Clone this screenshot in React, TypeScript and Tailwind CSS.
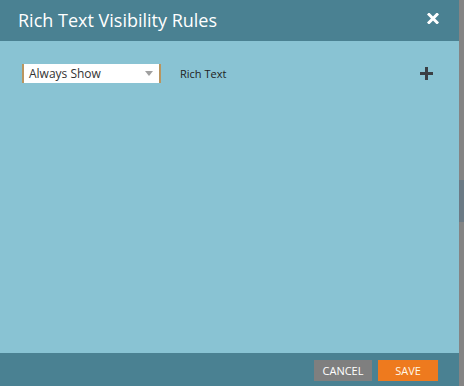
import React from "react";

export default function App() {
  return (
    <div
      className="flex w-[464px] h-[386px] overflow-hidden"
      style={{ fontFamily: '"Open Sans", "Liberation Sans", sans-serif' }}
    >
      <div className="flex flex-col w-[459px] h-full">
        <div className="flex items-center justify-between h-[41px] bg-[#4a8192] pl-[18px] pr-[20px] shrink-0">
          <div className="text-[18px] text-white leading-none pb-[2px]">Rich Text Visibility Rules</div>
          <svg width="12" height="11" viewBox="0 0 12 11" className="mb-[4px]">
            <path d="M2 1.5 L10 9.5 M10 1.5 L2 9.5" stroke="white" strokeWidth="3" strokeLinecap="square" />
          </svg>
        </div>
        <div className="flex-1 bg-[#89c3d3] pt-[23px] pl-[22px] pr-[26px]">
          <div className="flex items-center">
            <div className="relative flex items-center w-[139px] h-[19px] bg-white border-x-2 border-[#b9955f] pl-[5px]">
              <span className="text-[12px] text-[#333] leading-none">Always Show</span>
              <svg width="8" height="5" viewBox="0 0 8 5" className="absolute right-[6px] top-[7px]">
                <path d="M0 0 L8 0 L4 5 Z" fill="#a0a0a0" />
              </svg>
            </div>
            <span className="ml-[19px] text-[11px] text-[#222] leading-none">Rich Text</span>
            <div className="flex-1" />
            <svg width="13" height="13" viewBox="0 0 13 13">
              <path d="M6.5 0 V13 M0 6.5 H13" stroke="#3a3f44" strokeWidth="3" />
            </svg>
          </div>
        </div>
        <div className="flex items-center justify-end gap-[6px] h-[33px] bg-[#4a8192] pr-[21px] pt-[1px] shrink-0">
          <div className="flex items-center justify-center w-[58px] h-[21px] bg-[#7f7f7f] text-white text-[11px] leading-none">
            CANCEL
          </div>
          <div className="flex items-center justify-center w-[60px] h-[21px] bg-[#ee7a1e] text-[#fff8e8] text-[11px] leading-none">
            SAVE
          </div>
        </div>
      </div>
      <div className="flex flex-col w-[5px] h-full bg-[#848484]">
        <div className="h-[180px]" />
        <div className="h-[42px] bg-[#6b7a85]" />
      </div>
    </div>
  );
}
